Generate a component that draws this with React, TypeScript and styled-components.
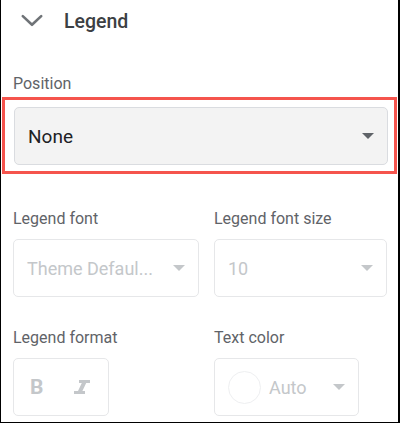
import styled, { createGlobalStyle } from "styled-components";

const GlobalStyle = createGlobalStyle`
  html, body {
    margin: 0;
    padding: 0;
    background: #fff;
  }
  * {
    box-sizing: border-box;
  }
`;

const Page = styled.div`
  width: 400px;
  height: 423px;
  border-left: 1px solid #000;
  border-right: 2px solid #000;
  border-bottom: 1px solid #000;
  background: #fff;
  font-family: Roboto, "Liberation Sans", sans-serif;
  display: flex;
  flex-direction: column;
  overflow: hidden;
`;

const Header = styled.div`
  display: flex;
  align-items: center;
  gap: 19px;
  height: 42px;
  padding-left: 18px;
`;

const Title = styled.span`
  font-size: 19.5px;
  font-weight: 500;
  color: #3c4043;
`;

const Label = styled.div<{ $top: number }>`
  font-size: 16px;
  line-height: 20px;
  color: #5f6368;
  margin-top: ${(p) => p.$top}px;
  padding-left: 12px;
`;

const Highlight = styled.div`
  margin: 3px 1px 0 1px;
  border: 3px solid #f5544d;
  padding: 7px 6px 6px 9px;
`;

const Select = styled.div<{ $disabled?: boolean; $width?: number }>`
  display: flex;
  align-items: center;
  height: 58px;
  width: ${(p) => (p.$width ? `${p.$width}px` : "auto")};
  border: 1px solid ${(p) => (p.$disabled ? "#e6e7e9" : "#dadce0")};
  border-radius: 5px;
  background: ${(p) => (p.$disabled ? "#fff" : "#f3f3f3")};
  padding: 0 13px 0 13px;
  color: ${(p) => (p.$disabled ? "#c4c7ca" : "#202124")};
  font-size: ${(p) => (p.$disabled ? "18px" : "19px")};
`;

const Value = styled.span`
  flex: 1;
  white-space: nowrap;
`;

const Caret = styled.span<{ $disabled?: boolean }>`
  width: 0;
  height: 0;
  border-left: 6px solid transparent;
  border-right: 6px solid transparent;
  border-top: 6px solid ${(p) => (p.$disabled ? "#c4c7ca" : "#5f6368")};
`;

const Grid = styled.div<{ $top: number }>`
  display: grid;
  grid-template-columns: 186px 173px;
  column-gap: 15px;
  padding-left: 12px;
  margin-top: ${(p) => p.$top}px;
`;

const Field = styled.div`
  display: flex;
  flex-direction: column;
`;

const FieldLabel = styled.div`
  font-size: 16px;
  line-height: 20px;
  color: #5f6368;
  margin-bottom: 10px;
`;

const FormatBox = styled.div`
  display: flex;
  align-items: center;
  gap: 30px;
  width: 96px;
  height: 58px;
  border: 1px solid #e6e7e9;
  border-radius: 5px;
  padding-left: 16px;
  color: #c4c7ca;
`;

const Bold = styled.span`
  font-size: 21px;
  font-weight: 700;
`;

const Italic = styled.span`
  display: flex;
`;

const Swatch = styled.span`
  width: 33px;
  height: 33px;
  border-radius: 50%;
  border: 1px solid #eeeff1;
  margin-right: 8px;
  flex-shrink: 0;
`;

const Chevron = () => (
  <svg width="26" height="26" viewBox="0 0 24 24" fill="none">
    <path
      d="M3.5 7.5 L12 15.5 L20.5 7.5"
      stroke="#6f7377"
      strokeWidth="2.4"
      strokeLinecap="round"
      strokeLinejoin="round"
    />
  </svg>
);

const ItalicIcon = () => (
  <svg width="18" height="16" viewBox="0 0 18 16">
    <path d="M6 1 H17 V4 H13.2 L9.4 12 H12 V15 H1 V12 H5 L8.8 4 H6 Z" fill="#c4c7ca" />
  </svg>
);

export default function App() {
  return (
    <>
      <GlobalStyle />
      <Page>
        <Header>
          <Chevron />
          <Title>Legend</Title>
        </Header>
        <Label $top={32}>Position</Label>
        <Highlight>
          <Select>
            <Value>None</Value>
            <Caret />
          </Select>
        </Highlight>
        <Grid $top={35}>
          <Field>
            <FieldLabel>Legend font</FieldLabel>
            <Select $disabled>
              <Value>Theme Defaul...</Value>
              <Caret $disabled />
            </Select>
          </Field>
          <Field>
            <FieldLabel>Legend font size</FieldLabel>
            <Select $disabled>
              <Value>10</Value>
              <Caret $disabled />
            </Select>
          </Field>
        </Grid>
        <Grid $top={31}>
          <Field>
            <FieldLabel>Legend format</FieldLabel>
            <FormatBox>
              <Bold>B</Bold>
              <Italic>
                <ItalicIcon />
              </Italic>
            </FormatBox>
          </Field>
          <Field>
            <FieldLabel>Text color</FieldLabel>
            <Select $disabled $width={145}>
              <Swatch />
              <Value>Auto</Value>
              <Caret $disabled />
            </Select>
          </Field>
        </Grid>
      </Page>
    </>
  );
}
